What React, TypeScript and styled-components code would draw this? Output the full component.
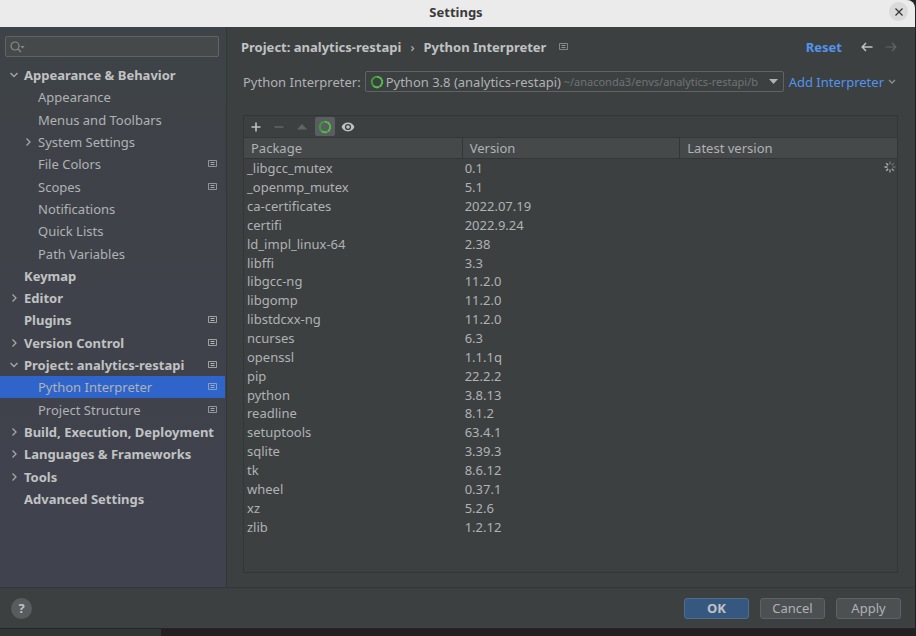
import React from "react";
import styled, { createGlobalStyle, css } from "styled-components";

const color = {
  panel: "#3c4041",
  side: "#3f434a",
  line: "#333637",
  text: "#b0b2b4",
  bright: "#c0c2c3",
  muted: "#707375",
  link: "#5394ec",
  selection: "#2f65ca",
};

const GlobalStyle = createGlobalStyle`
  *, *::before, *::after { box-sizing: border-box; }
  html, body, #root { height: 100%; }
  body {
    margin: 0;
    overflow: hidden;
    background: #231f22;
    color: ${color.text};
    font: 13px/18px "Noto Sans", "Open Sans", sans-serif;
  }
  button, input, select { font: inherit; color: inherit; }
`;

const Desktop = styled.div`
  min-height: 100vh;
  display: flex;
  flex-direction: column;
  padding-right: 1px;
  background: #231f22;
`;

const Dialog = styled.main`
  flex: 1;
  display: flex;
  flex-direction: column;
  border-radius: 0 8px 0 0;
  overflow: hidden;
  background: ${color.panel};
`;

const DesktopStrip = styled.div`
  display: flex;
  height: 8px;
  border-top: 1px solid #232526;
`;

const StripWindow = styled.div`
  width: 161px;
  background: #303636;
`;

const TitleBar = styled.header`
  display: grid;
  grid-template-columns: 1fr auto 1fr;
  align-items: center;
  height: 27px;
  padding: 0 7px 4px 4px;
  background: #ebebeb;
  color: #3a3a3a;
`;

const WindowTitle = styled.h1`
  grid-column: 2;
  margin: 0;
  font-size: 13px;
  line-height: 18px;
  font-weight: 700;
`;

const CloseButton = styled.button`
  justify-self: end;
  display: grid;
  place-items: center;
  width: 19px;
  height: 19px;
  padding: 0;
  border: 0;
  border-radius: 50%;
  background: #dadada;
  color: #333;
`;

const Body = styled.div`
  flex: 1;
  display: flex;
  min-height: 0;
`;

const Sidebar = styled.nav`
  display: flex;
  flex-direction: column;
  flex: none;
  width: 227px;
  padding-top: 9px;
  border-right: 1px solid ${color.line};
  background: linear-gradient(#3e4347, #3f424a 50%, #40434e);
`;

const SearchBox = styled.label`
  display: flex;
  align-items: center;
  height: 21px;
  margin: 0 7px 7px 5px;
  padding: 0 4px;
  border: 1px solid #5f6466;
  border-radius: 2px;
  background: #45494a;
  color: #888c8e;
`;

const SearchInput = styled.input`
  flex: 1;
  min-width: 0;
  border: 0;
  padding: 0 4px;
  outline: 0;
  background: transparent;
`;

const Tree = styled.ul`
  display: grid;
  grid-auto-rows: 1fr;
  min-height: 446px;
  margin: 0 1px 0 0;
  padding: 0;
  list-style: none;
`;

const TreeRow = styled.button<{ $level: number; $selected?: boolean }>`
  display: flex;
  align-items: center;
  width: 100%;
  height: 100%;
  padding: 0 8px 0 ${(p) => (p.$level ? 22 : 8)}px;
  border: 0;
  background: ${(p) => (p.$selected ? color.selection : "transparent")};
  color: ${(p) => (p.$level ? color.text : color.bright)};
  font-weight: ${(p) => (p.$level ? 400 : 700)};
  white-space: nowrap;
  text-align: left;
`;

const Twisty = styled.span`
  display: grid;
  place-items: center;
  flex: none;
  width: 12px;
  margin-right: 4px;
  color: #a5a8aa;
`;

const TreeLabel = styled.span`
  flex: 1;
`;

const Content = styled.section`
  flex: 1;
  min-width: 0;
  display: flex;
  flex-direction: column;
  padding: 9px 17px 14px 16px;
`;

const Heading = styled.div`
  display: flex;
  align-items: center;
  height: 22px;
  color: ${color.bright};
  font-weight: 700;
  margin: 0 -3px 0 -2px;
`;

const Breadcrumb = styled.span`
  white-space: nowrap;
`;

const Chevron = styled.span`
  margin: 0 9px;
  font-weight: 400;
`;

const HeadingMark = styled.span`
  display: grid;
  flex: 1;
  padding-left: 13px;
  color: #9a9da0;
`;

const ResetLink = styled.a`
  margin-right: 15px;
  color: ${color.link};
  text-decoration: none;
`;

const IconButton = styled.button<{ $active?: boolean; $dim?: boolean }>`
  display: grid;
  place-items: center;
  width: 20px;
  height: 19px;
  padding: 0;
  border: 0;
  border-radius: 2px;
  background: ${(p) => (p.$active ? "#5a5e61" : "transparent")};
  color: ${(p) => (p.$dim ? "#616466" : "#c0c2c4")};
`;

const History = styled.div`
  display: flex;
  gap: 4px;
`;

const InterpreterRow = styled.div`
  display: flex;
  align-items: center;
  margin-top: 13px;
  white-space: nowrap;
`;

const ComboBox = styled.div`
  display: flex;
  align-items: center;
  flex: 1;
  min-width: 0;
  height: 21px;
  margin: 0 5px 0 4px;
  padding: 0 5px 0 4px;
  border: 1px solid #5f6365;
  border-radius: 2px;
`;

const ComboSelect = styled.select`
  appearance: none;
  flex: none;
  padding: 0 2px;
  border: 0;
  outline: 0;
  background: transparent;
`;

const ComboPath = styled.span`
  flex: 1;
  min-width: 0;
  margin-right: 4px;
  overflow: hidden;
  color: ${color.muted};
  font-size: 11px;
`;

const AddLink = styled.a`
  display: flex;
  align-items: center;
  gap: 4px;
  padding-right: 2px;
  color: ${color.link};
  text-decoration: none;
`;

const PackagePanel = styled.div`
  flex: 1;
  display: flex;
  flex-direction: column;
  margin-top: 23px;
  border: 1px solid ${color.line};
`;

const Toolbar = styled.div`
  display: flex;
  align-items: center;
  gap: 3px;
  height: 21px;
  padding-left: 2px;
`;

const PackageTable = styled.table`
  width: 100%;
  height: 399px;
  table-layout: fixed;
  border-collapse: separate;
  border-spacing: 0;
`;

const HeadCell = styled.th`
  height: 22px;
  padding: 0 7px;
  border: solid ${color.line};
  border-width: 1px 0 1px 0;
  background: #45494a;
  font-weight: 400;
  text-align: left;

  & + & {
    border-left-width: 1px;
  }
`;

const Cell = styled.td`
  padding: 0 3px;
  line-height: 18px;
`;

const StatusCell = styled.td`
  padding: 0 0 3px;
  text-align: right;
  color: #b0b2b4;

  svg {
    display: block;
    margin-left: auto;
  }
`;

const Footer = styled.footer`
  display: flex;
  align-items: center;
  gap: 11px;
  height: 41px;
  padding: 0 14px 0 11px;
  border-top: 1px solid ${color.line};
`;

const HelpButton = styled.button`
  display: grid;
  place-items: center;
  width: 21px;
  height: 21px;
  margin-right: auto;
  padding: 0;
  border: 0;
  border-radius: 50%;
  background: #585c5e;
  color: ${color.bright};
  font-weight: 700;
`;

const ActionButton = styled.button<{ $primary?: boolean }>`
  width: 65px;
  height: 21px;
  padding: 0;
  border: 1px solid #5e6264;
  border-radius: 3px;
  background: #4c5052;
  line-height: 18px;
  ${(p) =>
    p.$primary &&
    css`
      border-color: #4c708c;
      background: #365880;
      color: ${color.bright};
      font-weight: 700;
    `}
`;

const SearchIcon = () => (
  <svg width="17" height="12" viewBox="0 0 17 12" fill="none" stroke="currentColor" strokeWidth="1.2" aria-hidden="true">
    <circle cx="5" cy="5" r="4" />
    <path d="M8 8l3 3" />
    <path d="M10.5 5h4l-2 2.4z" fill="currentColor" stroke="none" />
  </svg>
);

const Arrow = ({ open }: { open: boolean }) => (
  <svg width="10" height="10" viewBox="0 0 10 10" fill="none" stroke="currentColor" strokeWidth="1.3" aria-hidden="true">
    <path d={open ? "M1.5 3L5 6.5 8.5 3" : "M3.5 1.5L7 5 3.5 8.5"} />
  </svg>
);

const ProjectMark = () => (
  <svg width="9" height="8" viewBox="0 0 9 8" fill="none" stroke="currentColor" aria-label="For current project">
    <path d="M.5 .5h8v6h-8z" opacity=".75" />
    <path d="M2.5 2.500h4M2.500 4.500h4" opacity=".9" />
  </svg>
);

const Ring = () => (
  <svg width="14" height="14" viewBox="0 0 14 14" fill="none" aria-hidden="true">
    <circle cx="7" cy="7" r="5.2" stroke="#3f9a3c" strokeWidth="2" />
    <path d="M7 1.8A5.2 5.2 0 0 1 12.2 7 5.2 5.2 0 0 1 10 11.2" stroke="#62c554" strokeWidth="1.6" strokeDasharray="2 .7" />
    <path d="M3.4 10.8A5.2 5.2 0 0 0 9 11.8" stroke="#55b84a" strokeWidth="1.8" />
  </svg>
);

const ArrowLeft = () => (
  <svg width="12" height="10" viewBox="0 0 12 10" fill="none" stroke="currentColor" strokeWidth="1.5" aria-hidden="true">
    <path d="M11.5 5H1.2M5 1L1.2 5 5 9" />
  </svg>
);

const ArrowRight = () => (
  <svg width="12" height="10" viewBox="0 0 12 10" fill="none" stroke="currentColor" strokeWidth="1.2" aria-hidden="true">
    <path d="M.5 5h10.3M7 1l3.8 4L7 9" />
  </svg>
);

const DropArrow = () => (
  <svg width="9" height="5" viewBox="0 0 9 5" fill="#b0b2b4" aria-hidden="true">
    <path d="M0 0h9L4.5 5z" />
  </svg>
);

const SmallChevron = () => (
  <svg width="8" height="6" viewBox="0 0 8 6" fill="none" stroke="#8d9092" strokeWidth="1.3" aria-hidden="true">
    <path d="M1 1l3 3 3-3" />
  </svg>
);

const CloseIcon = () => (
  <svg width="8" height="8" viewBox="0 0 8 8" stroke="currentColor" strokeWidth="1.2" aria-hidden="true">
    <path d="M.5 .5l7 7M7.500 .5l-7 7" />
  </svg>
);

const PlusIcon = () => (
  <svg width="10" height="10" viewBox="0 0 10 10" stroke="currentColor" strokeWidth="1.6" aria-hidden="true">
    <path d="M5 .5v9M.5 5h9" />
  </svg>
);

const MinusIcon = () => (
  <svg width="10" height="10" viewBox="0 0 10 10" stroke="currentColor" strokeWidth="1.5" aria-hidden="true">
    <path d="M.5 5h9" />
  </svg>
);

const UpIcon = () => (
  <svg width="10" height="6" viewBox="0 0 10 6" fill="currentColor" aria-hidden="true">
    <path d="M0 5.5h10L5 0z" />
  </svg>
);

const EyeIcon = () => (
  <svg width="14" height="10" viewBox="0 0 14 10" aria-hidden="true">
    <path
      fill="currentColor"
      fillRule="evenodd"
      d="M7 .6C10 .6 12.4 2.4 13.4 5 12.4 7.6 10 9.4 7 9.4S1.6 7.6.6 5C1.6 2.4 4 .6 7 .6zM7 1.9A3.1 3.1 0 1 0 7 8.1 3.1 3.1 0 1 0 7 1.9z"
    />
    <circle cx="7" cy="5" r="1.8" fill="currentColor" />
  </svg>
);

const Spinner = () => (
  <svg width="14" height="12" viewBox="0 0 14 12" fill="none" stroke="currentColor" strokeWidth="1.4" aria-label="Loading">
    <path d="M7 .5v3" opacity=".5" />
    <path d="M3.2 2.2l2 2M1.5 6h3M3.2 9.8l2-2" />
    <path d="M7 8.5v3M10.8 9.8l-2-2" opacity=".8" />
    <path d="M9.5 6h3M10.8 2.2l-2 2" opacity=".4" />
  </svg>
);

type Node = { label: string; level: number; open?: boolean; mark?: boolean; selected?: boolean };

const nodes: Node[] = [
  { label: "Appearance & Behavior", level: 0, open: true },
  { label: "Appearance", level: 1 },
  { label: "Menus and Toolbars", level: 1 },
  { label: "System Settings", level: 1, open: false },
  { label: "File Colors", level: 1, mark: true },
  { label: "Scopes", level: 1, mark: true },
  { label: "Notifications", level: 1 },
  { label: "Quick Lists", level: 1 },
  { label: "Path Variables", level: 1 },
  { label: "Keymap", level: 0 },
  { label: "Editor", level: 0, open: false },
  { label: "Plugins", level: 0, mark: true },
  { label: "Version Control", level: 0, open: false, mark: true },
  { label: "Project: analytics-restapi", level: 0, open: true, mark: true },
  { label: "Python Interpreter", level: 1, mark: true, selected: true },
  { label: "Project Structure", level: 1, mark: true },
  { label: "Build, Execution, Deployment", level: 0, open: false },
  { label: "Languages & Frameworks", level: 0, open: false },
  { label: "Tools", level: 0, open: false },
  { label: "Advanced Settings", level: 0 },
];

const packages: [string, string][] = [
  ["_libgcc_mutex", "0.1"],
  ["_openmp_mutex", "5.1"],
  ["ca-certificates", "2022.07.19"],
  ["certifi", "2022.9.24"],
  ["ld_impl_linux-64", "2.38"],
  ["libffi", "3.3"],
  ["libgcc-ng", "11.2.0"],
  ["libgomp", "11.2.0"],
  ["libstdcxx-ng", "11.2.0"],
  ["ncurses", "6.3"],
  ["openssl", "1.1.1q"],
  ["pip", "22.2.2"],
  ["python", "3.8.13"],
  ["readline", "8.1.2"],
  ["setuptools", "63.4.1"],
  ["sqlite", "3.39.3"],
  ["tk", "8.6.12"],
  ["wheel", "0.37.1"],
  ["xz", "5.2.6"],
  ["zlib", "1.2.12"],
];

export default function App() {
  return (
    <Desktop>
      <GlobalStyle />
      <Dialog>
        <TitleBar>
          <WindowTitle>Settings</WindowTitle>
          <CloseButton aria-label="Close">
            <CloseIcon />
          </CloseButton>
        </TitleBar>
        <Body>
          <Sidebar aria-label="Settings categories">
            <SearchBox>
              <SearchIcon />
              <SearchInput type="text" aria-label="Search settings" />
            </SearchBox>
            <Tree>
              {nodes.map((n) => (
                <li key={n.label}>
                  <TreeRow
                    $level={n.level}
                    $selected={n.selected}
                    aria-expanded={n.open}
                    aria-current={n.selected ? "page" : undefined}
                  >
                    <Twisty>{n.open !== undefined && <Arrow open={n.open} />}</Twisty>
                    <TreeLabel>{n.label}</TreeLabel>
                    {n.mark && <ProjectMark />}
                  </TreeRow>
                </li>
              ))}
            </Tree>
          </Sidebar>
          <Content>
            <Heading>
              <Breadcrumb>Project: analytics-restapi</Breadcrumb>
              <Chevron>›</Chevron>
              <Breadcrumb>Python Interpreter</Breadcrumb>
              <HeadingMark>
                <ProjectMark />
              </HeadingMark>
              <ResetLink href="#reset">Reset</ResetLink>
              <History>
                <IconButton aria-label="Back">
                  <ArrowLeft />
                </IconButton>
                <IconButton aria-label="Forward" $dim>
                  <ArrowRight />
                </IconButton>
              </History>
            </Heading>
            <InterpreterRow>
              <label htmlFor="interpreter">Python Interpreter:</label>
              <ComboBox>
                <Ring />
                <ComboSelect id="interpreter">
                  <option>Python 3.8 (analytics-restapi)</option>
                </ComboSelect>
                <ComboPath>~/anaconda3/envs/analytics-restapi/b</ComboPath>
                <DropArrow />
              </ComboBox>
              <AddLink href="#add">
                Add Interpreter
                <SmallChevron />
              </AddLink>
            </InterpreterRow>
            <PackagePanel>
              <Toolbar>
                <IconButton aria-label="Install">
                  <PlusIcon />
                </IconButton>
                <IconButton aria-label="Uninstall" $dim>
                  <MinusIcon />
                </IconButton>
                <IconButton aria-label="Upgrade" $dim>
                  <UpIcon />
                </IconButton>
                <IconButton aria-label="Use Conda Package Manager" aria-pressed="true" $active>
                  <Ring />
                </IconButton>
                <IconButton aria-label="Show Early Releases">
                  <EyeIcon />
                </IconButton>
              </Toolbar>
              <PackageTable>
                <thead>
                  <tr>
                    <HeadCell>Package</HeadCell>
                    <HeadCell>Version</HeadCell>
                    <HeadCell>Latest version</HeadCell>
                  </tr>
                </thead>
                <tbody>
                  {packages.map(([name, version], i) => (
                    <tr key={name}>
                      <Cell>{name}</Cell>
                      <Cell>{version}</Cell>
                      <StatusCell>{i === 0 && <Spinner />}</StatusCell>
                    </tr>
                  ))}
                </tbody>
              </PackageTable>
            </PackagePanel>
          </Content>
        </Body>
        <Footer>
          <HelpButton aria-label="Help">?</HelpButton>
          <ActionButton $primary>OK</ActionButton>
          <ActionButton>Cancel</ActionButton>
          <ActionButton>Apply</ActionButton>
        </Footer>
      </Dialog>
      <DesktopStrip>
        <StripWindow />
      </DesktopStrip>
    </Desktop>
  );
}
